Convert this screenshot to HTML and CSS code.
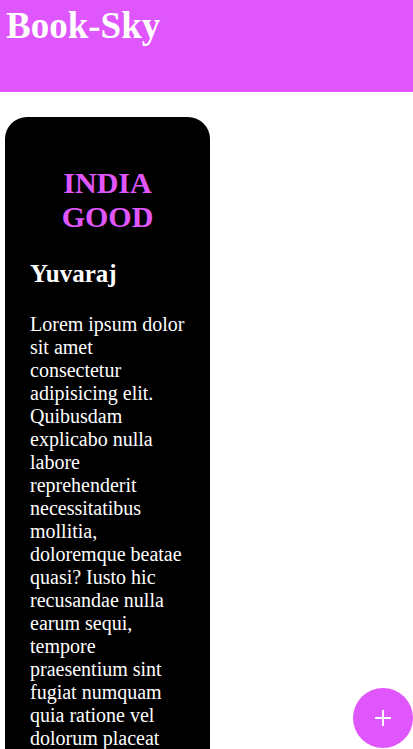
FILE: index.html
```html
<!DOCTYPE html>
<html lang="en">
<head>
<meta charset="utf-8">
<title>Book-Sky</title>
<link rel="stylesheet" href="styles.css">
</head>
<body>
<header class="topbar">
  <h1 class="brand">Book-Sky</h1>
</header>
<main class="books">
  <article class="card">
    <h2 class="card-title">INDIA GOOD</h2>
    <h3 class="card-author">Yuvaraj</h3>
    <p class="card-text">Lorem ipsum dolor sit amet consectetur adipisicing elit. Quibusdam explicabo nulla labore reprehenderit necessitatibus mollitia, doloremque beatae quasi? Iusto hic recusandae nulla earum sequi, tempore praesentium sint fugiat numquam quia ratione vel dolorum placeat fugit.</p>
  </article>
</main>
<button class="fab" aria-label="Add book">
  <svg width="18" height="18" viewBox="0 0 18 18" aria-hidden="true">
    <path d="M9 1v16M1 9h16" stroke="#fff" stroke-width="2" fill="none"/>
  </svg>
</button>
</body>
</html>
```
FILE: styles.css
```css
html, body {
  margin: 0;
  padding: 0;
  background: #ffffff;
  font-family: "Liberation Serif", "Times New Roman", serif;
}

.topbar {
  background: #e056fd;
  height: 92px;
  padding: 4px 6px 0;
  box-sizing: border-box;
}

.brand {
  margin: 0;
  font-size: 37px;
  font-weight: bold;
  color: #ffffff;
}

.books {
  display: flex;
  padding: 25px 0 0 5px;
}

.card {
  width: 205px;
  box-sizing: border-box;
  background: #000000;
  border-radius: 22px;
  padding: 49px 25px 25px;
  color: #ffffff;
}

.card-title {
  margin: 0;
  font-size: 30px;
  font-weight: bold;
  text-align: center;
  color: #e056fd;
}

.card-author {
  margin: 26px 0 0;
  font-size: 25px;
  font-weight: bold;
}

.card-text {
  margin: 25px 0 0;
  font-size: 20px;
}

.fab {
  position: fixed;
  right: 0;
  bottom: 1px;
  width: 60px;
  height: 60px;
  border: none;
  border-radius: 50%;
  background: #e056fd;
  display: flex;
  align-items: center;
  justify-content: center;
  padding: 0;
  cursor: pointer;
}
```
